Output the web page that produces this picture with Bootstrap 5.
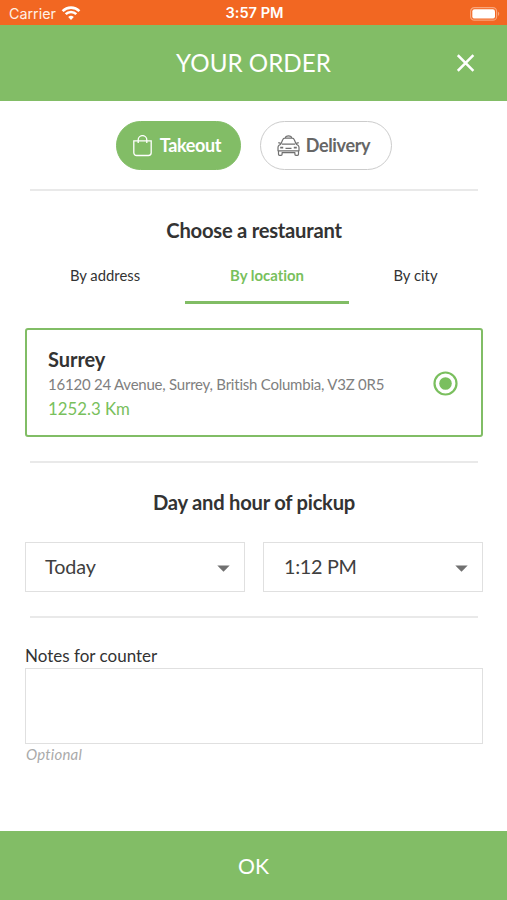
<!DOCTYPE html>
<html lang="en">
<head>
<meta charset="utf-8">
<meta name="viewport" content="width=device-width, initial-scale=1">
<title>Your order</title>
<link href="https://cdn.jsdelivr.net/npm/bootstrap@5.3.0/dist/css/bootstrap.min.css" rel="stylesheet">
<style>
:root { --leaf: #82bd66; --leaf-text: #78c05c; --ink: #333; }
body { font-family: Lato, "Liberation Sans", sans-serif; color: var(--ink); line-height: 1.2; }
body, button { font-variant-ligatures: none; font-feature-settings: "liga" 0, "dlig" 0, "clig" 0; letter-spacing: .01px; }
.screen { height: 900px; }
.status { height: 25px; background: #f26722; font: 14.3px/25px Inter, "Liberation Sans", sans-serif; padding: 2px 7px 0 9px; color: #fff0e6; }
.status-side { flex: 1 1 0; }
.wifi { margin-top: -2px; }
.clock { font-weight: 600; font-size: 14.6px; color: #fff; }
.topbar { height: 76px; background: var(--leaf); padding: 0 32px; }
.topbar h1 { font-size: 24.2px; font-weight: 400; margin: 0; }
.close-btn { width: 18px; }
.page { padding: 0 24px 0 25px; }
.modes { padding-top: 20px; gap: 19px; }
.pill { height: 49px; border-radius: 25px; font-weight: 700; font-size: 18px; letter-spacing: -.35px; border: 1.5px solid #ccc; color: #666; padding: 0 3px 0 0; }
.pill:hover { color: #666; border-color: #ccc; }
.pill.chosen, .pill.chosen:hover { background: var(--leaf); border-color: var(--leaf); color: #fff; }
.takeout { width: 125px; }
.delivery { width: 132px; padding-right: 5px; }
.cab { margin: -1px 6px 0 0; }
.rule { height: 2px; background: #e9e9e9; margin: 19px 5px 0; }
.rule.spaced { margin-top: 24px; }
.heading { font-size: 20.2px; letter-spacing: -.25px; font-weight: 700; margin: 27px 0 0; line-height: 24px; text-align: center; }
.tabs { height: 46px; margin: 16px 1px 0 0; }
.tab { width: 164px; height: 46px; border: 0; background: none; padding: 0 0 9px; font-size: 14.8px; line-height: 20px; color: var(--ink); border-bottom: 3px solid transparent; }
.tab.current { color: var(--leaf-text); font-weight: 700; font-size: 14.9px; padding-bottom: 9px; border-color: #81bd65; }
.tab-address { width: 160px; }
.tab-city { width: 133px; }
.place { height: 109px; margin-top: 24px; border: 2px solid #81bd65; border-radius: 3px; padding: 2px 22px 0 21px; }
.place-name { font-size: 20px; letter-spacing: -.05px; font-weight: 700; line-height: 26px; }
.place-street { font-size: 15px; letter-spacing: -.23px; line-height: 24px; color: #808080; }
.place-km { font-size: 16.8px; line-height: 26px; color: var(--leaf-text); }
.pickers { margin-top: 28px; gap: 18px; }
.picker { height: 50px; border: 1px solid #e0e0e0; border-radius: 0; background: #fff; font-size: 19.8px; letter-spacing: -.1px; color: #404040; padding: 0 14px 0 19px; }
.picker + .picker { padding-left: 20px; letter-spacing: -.3px; }
.picker svg { margin-top: 2px; }
.note-label { font-size: 17px; line-height: 22px; margin: 27px 0 1px; }
.note { height: 76px; border: 1px solid #e0e0e0; border-radius: 0; resize: none; }
.hint { font-size: 15px; letter-spacing: .2px; line-height: 20px; font-style: italic; color: #aaa; padding-left: 1px; }
.confirm { height: 69px; background: var(--leaf); border: 0; border-radius: 0; color: #fff; font-size: 21.2px; padding: 3px 0 0; }
</style>
</head>
<body>
<div class="screen d-flex flex-column overflow-hidden">
  <div class="status d-flex align-items-center">
    <div class="status-side d-flex align-items-center">
      <span>Carrier</span>
      <svg class="wifi ms-1" width="22" height="16" viewBox="-2 -1 22 16" fill="none" stroke="#fff" stroke-width="2.6"><path d="M.6 5.1a12 12 0 0 1 16.800 0M3.700 8.200a7.500 7.500 0 0 1 10.600 0"/><path d="M9 14 6.200 11.100a4 4 0 0 1 5.600 0Z" fill="#fff" stroke="none"/></svg>
    </div>
    <span class="clock">3:57 PM</span>
    <div class="status-side d-flex justify-content-end">
      <svg width="30" height="14" viewBox="0 0 30 14"><rect x=".6" y=".6" width="26" height="12.600" rx="3.800" fill="none" stroke="#f9a57b" stroke-width="1.200"/><rect x="2.300" y="2.200" width="22.700" height="9.400" rx="2.200" fill="#fff"/><path d="M28 4.800c1.700.7 1.700 3.500 0 4.200Z" fill="#f9a57b"/></svg>
    </div>
  </div>
  <header class="topbar d-flex align-items-center text-white">
    <div class="close-btn"></div>
    <h1 class="flex-grow-1 text-center">YOUR ORDER</h1>
    <svg class="close-btn" height="18" viewBox="0 0 18 18" stroke="#fff" stroke-width="2.500" role="img" aria-label="Close"><path d="m.8 1.200 15.600 15.600M16.400 1.200.8 16.800"/></svg>
  </header>
  <main class="page flex-grow-1">
    <div class="modes d-flex justify-content-center">
      <button class="btn pill chosen takeout d-flex align-items-center justify-content-center gap-2">
        <svg width="19" height="22" viewBox="0 0 19 22" fill="none" stroke="#fff" stroke-width="1.300"><path d="M.8 5.800h17.400v11.900a2.800 2.800 0 0 1-2.800 2.800H3.600a2.800 2.800 0 0 1-2.800-2.800ZM5.200 8.100V4.900a4.300 4.300 0 0 1 8.600 0v3.200"/></svg>
        <span>Takeout</span>
      </button>
      <button class="btn pill delivery d-flex align-items-center justify-content-center">
        <svg class="cab" width="23" height="21" viewBox="0 0 23 21" fill="none" stroke="#707070" stroke-width="1.200" stroke-linejoin="round"><path d="M8 3.200 9 1.500Q11.500.3 14 1.500l1 1.700M3.800 9.300 5.700 4.800Q6.300 3.200 8 3.200h7q1.700 0 2.300 1.600l1.900 4.500M5 9.100h13M3.800 9.300 2 10.200Q1 11 1 12.500v3.300h21v-3.300q0-1.500-1-2.300l-1.800-.9M1.500 15.800v3.500q0 1 1 1h1.600q1 0 1-1v-1.600h12.800v1.600q0 1 1 1h1.600q1 0 1-1v-3.500M1.300 7.600l2.500.8M21.700 7.600l-2.500.8M8.500 13.300h6"/><path d="M3.200 12.600h3M16.800 12.600h3" stroke-width="1.800"/></svg>
        <span>Delivery</span>
      </button>
    </div>
    <div class="rule"></div>
    <h2 class="heading">Choose a restaurant</h2>
    <div class="tabs d-flex justify-content-center">
      <button class="tab tab-address">By address</button>
      <button class="tab current">By location</button>
      <button class="tab tab-city">By city</button>
    </div>
    <div class="place d-flex align-items-center justify-content-between">
      <div>
        <div class="place-name">Surrey</div>
        <div class="place-street">16120 24 Avenue, Surrey, British Columbia, V3Z 0R5</div>
        <div class="place-km">1252.3 Km</div>
      </div>
      <svg width="26" height="26" viewBox="0 0 26 26"><circle cx="12.500" cy="12.500" r="11" fill="none" stroke="#7abf5e" stroke-width="2.200"/><circle cx="12.500" cy="12.500" r="6.300" fill="#7abf5e"/></svg>
    </div>
    <div class="rule spaced"></div>
    <h2 class="heading">Day and hour of pickup</h2>
    <div class="pickers d-flex">
      <button class="picker d-flex align-items-center justify-content-between flex-fill w-50"><span>Today</span><svg width="13" height="7" viewBox="0 0 13 7"><path d="M.3.500h12.400L6.500 6.800Z" fill="#707070"/></svg></button>
      <button class="picker d-flex align-items-center justify-content-between flex-fill w-50"><span>1:12 PM</span><svg width="13" height="7" viewBox="0 0 13 7"><path d="M.3.500h12.400L6.500 6.800Z" fill="#707070"/></svg></button>
    </div>
    <div class="rule spaced"></div>
    <label class="note-label d-block" for="note">Notes for counter</label>
    <textarea id="note" class="note form-control d-block"></textarea>
    <div class="hint">Optional</div>
  </main>
  <button class="confirm w-100">OK</button>
</div>
<script src="https://cdn.jsdelivr.net/npm/bootstrap@5.3.0/dist/js/bootstrap.bundle.min.js"></script>
</body>
</html>
